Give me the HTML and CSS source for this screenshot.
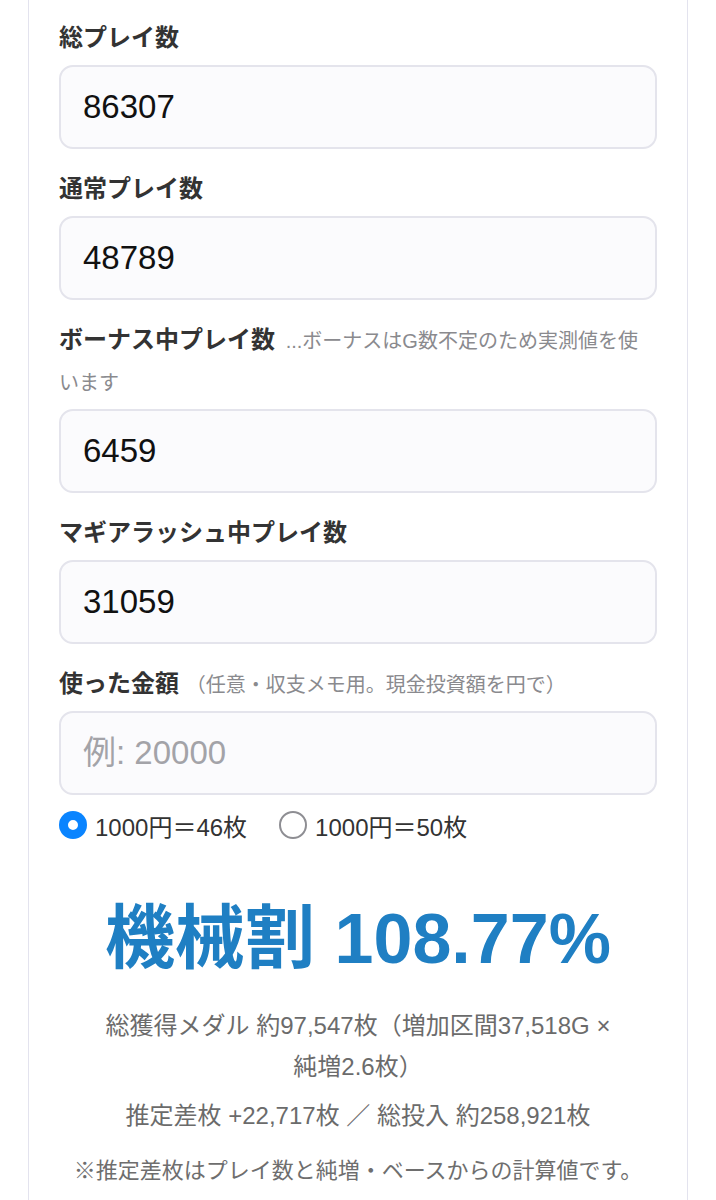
FILE: index.html
```html
<!DOCTYPE html>
<html lang="ja">
<head>
<meta charset="utf-8">
<title>機械割計算</title>
<link rel="stylesheet" href="styles.css">
</head>
<body>
<div class="page">
  <div class="card">
    <div class="field">
      <label class="field-label" for="total">総プレイ数</label>
      <input class="input" id="total" type="text" inputmode="numeric" value="86307">
    </div>
    <div class="field">
      <label class="field-label" for="normal">通常プレイ数</label>
      <input class="input" id="normal" type="text" inputmode="numeric" value="48789">
    </div>
    <div class="field">
      <label class="field-label" for="bonus">ボーナス中プレイ数 <span class="hint hint-gap">...ボーナスはG数不定のため実測値を使います</span></label>
      <input class="input" id="bonus" type="text" inputmode="numeric" value="6459">
    </div>
    <div class="field">
      <label class="field-label" for="rush">マギアラッシュ中プレイ数</label>
      <input class="input" id="rush" type="text" inputmode="numeric" value="31059">
    </div>
    <div class="field field-last">
      <label class="field-label" for="money">使った金額 <span class="hint">（任意・収支メモ用。現金投資額を円で）</span></label>
      <input class="input" id="money" type="text" inputmode="numeric" placeholder="例: 20000">
    </div>
    <div class="rate-row">
      <label class="rate-option"><input class="radio" type="radio" name="rate" checked><span>1000円＝46枚</span></label>
      <label class="rate-option"><input class="radio" type="radio" name="rate"><span>1000円＝50枚</span></label>
    </div>
    <div class="result">
      <div class="result-main">機械割 108.77%</div>
      <p class="result-line result-medals">総獲得メダル 約97,547枚（増加区間37,518G × 純増2.6枚）</p>
      <p class="result-line result-diff">推定差枚 +22,717枚 ／ 総投入 約258,921枚</p>
      <p class="result-note">※推定差枚はプレイ数と純増・ベースからの計算値です。</p>
    </div>
  </div>
</div>
</body>
</html>
```
FILE: styles.css
```css
html, body {
  margin: 0;
  padding: 0;
  background: #ffffff;
}

body {
  font-family: "Liberation Sans", "Noto Sans CJK JP", sans-serif;
  color: #333333;
}

.page {
  padding: 0 28px;
}

.card {
  border-left: 1px solid #e3e3ee;
  border-right: 1px solid #e3e3ee;
  padding: 17px 30px 40px;
  min-height: 1300px;
  box-sizing: border-box;
}

.field {
  display: flex;
  flex-direction: column;
  margin-bottom: 19px;
}

.field-last {
  margin-bottom: 0;
}

.field-label {
  font-size: 24px;
  font-weight: 700;
  line-height: 42px;
  color: #333333;
  margin-bottom: 6px;
}

.hint {
  font-size: 20px;
  font-weight: 400;
  line-height: 20px;
  color: #8a8a8e;
}

.hint-gap {
  margin-left: 4px;
}

.input {
  display: block;
  box-sizing: border-box;
  width: 100%;
  height: 84px;
  margin: 0;
  padding: 0 22px;
  border: 2px solid #e4e4ec;
  border-radius: 14px;
  background: #fbfbfd;
  font-family: "Liberation Sans", "Noto Sans CJK JP", sans-serif;
  font-size: 33px;
  color: #111111;
  outline: none;
}

.input::placeholder {
  color: #a3a3a8;
}

.rate-row {
  display: flex;
  align-items: center;
  gap: 32px;
  margin-top: 14px;
  height: 32px;
}

.rate-option {
  display: flex;
  align-items: center;
  gap: 8px;
  font-size: 24px;
  color: #333333;
}

.radio {
  appearance: none;
  -webkit-appearance: none;
  width: 28px;
  height: 28px;
  margin: 0;
  border-radius: 50%;
  border: 2px solid #8e8e93;
  background: #ffffff;
  box-sizing: border-box;
}

.radio:checked {
  border: none;
  background: #ffffff;
  box-shadow: inset 0 0 0 9px #0a84ff;
}

.result {
  text-align: center;
}

.result-main {
  margin-top: 58px;
  font-size: 70px;
  font-weight: 700;
  line-height: 80px;
  color: #1f7fc3;
}

.result-line {
  margin: 0 auto;
  font-size: 24px;
  line-height: 41px;
  color: #6b6b6b;
}

.result-medals {
  margin-top: 26px;
  max-width: 525px;
}

.result-diff {
  margin-top: 8px;
}

.result-note {
  margin: 17px 0 0;
  font-size: 22px;
  line-height: 36px;
  color: #6e6e6e;
}
```
